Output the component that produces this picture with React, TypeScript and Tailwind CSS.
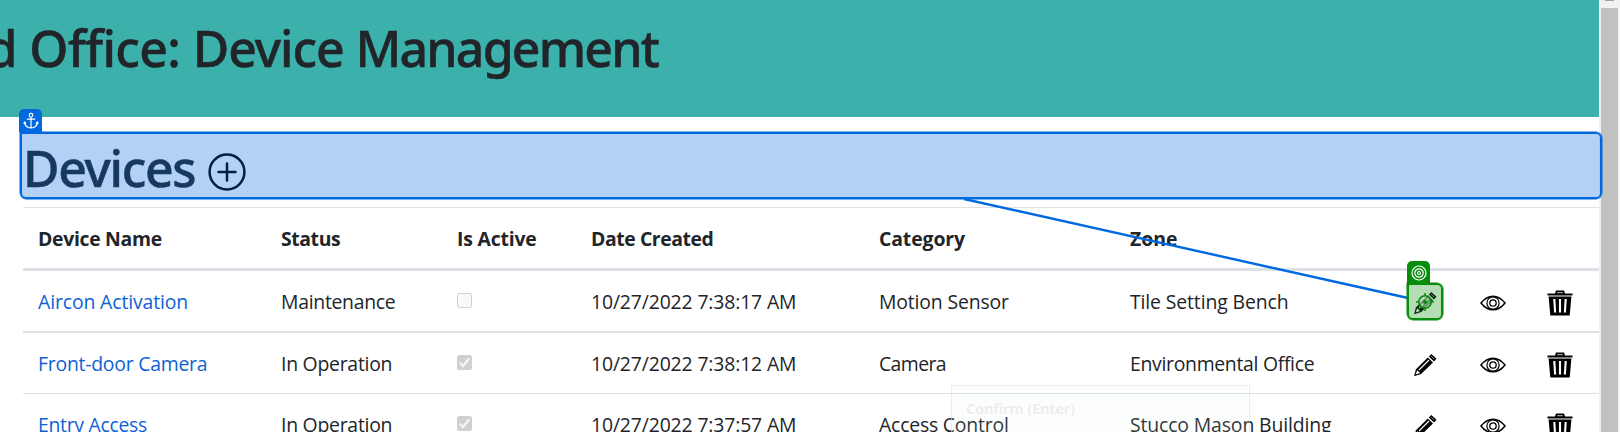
type Cell = { text: string; track: string };

const GRID =
  "grid grid-cols-[243px_176px_134px_288px_251px_283px_66px_67px_67px] items-center";

const HEAD: Cell[] = [
  { text: "Device Name", track: "tracking-[-0.3px]" },
  { text: "Status", track: "tracking-[-0.4px]" },
  { text: "Is Active", track: "tracking-[-0.2px]" },
  { text: "Date Created", track: "tracking-[-0.42px]" },
  { text: "Category", track: "tracking-[-0.1px]" },
  { text: "Zone", track: "" },
];

const ROWS: {
  name: Cell;
  status: Cell;
  active: boolean;
  date: string;
  category: Cell;
  zone: Cell;
  border: string;
}[] = [
  {
    name: { text: "Aircon Activation", track: "tracking-[-0.12px]" },
    status: { text: "Maintenance", track: "tracking-[-0.28px]" },
    active: false,
    date: "10/27/2022 7:38:17 AM",
    category: { text: "Motion Sensor", track: "tracking-[-0.15px]" },
    zone: { text: "Tile Setting Bench", track: "tracking-[-0.12px]" },
    border: "border-b-2",
  },
  {
    name: { text: "Front-door Camera", track: "tracking-[-0.24px]" },
    status: { text: "In Operation", track: "tracking-[-0.25px]" },
    active: true,
    date: "10/27/2022 7:38:12 AM",
    category: { text: "Camera", track: "tracking-[-0.6px]" },
    zone: { text: "Environmental Office", track: "tracking-[-0.3px]" },
    border: "border-b",
  },
  {
    name: { text: "Entry Access", track: "tracking-[-0.3px]" },
    status: { text: "In Operation", track: "tracking-[-0.25px]" },
    active: true,
    date: "10/27/2022 7:37:57 AM",
    category: { text: "Access Control", track: "tracking-[-0.2px]" },
    zone: { text: "Stucco Mason Building", track: "tracking-[-0.13px]" },
    border: "border-b",
  },
];

function Checkbox({ checked }: { checked: boolean }) {
  return checked ? (
    <div className="-mt-[2px] ml-[15px] size-[15px] rounded-[2.5px] bg-[#d0d0d0]">
      <svg viewBox="0 0 15 15" className="size-full" fill="none">
        <path d="M2.8 7.8 6 11 12.2 3.4" stroke="#f6f6f6" strokeWidth="2.3" />
      </svg>
    </div>
  ) : (
    <div className="-mt-px ml-[15px] size-[15px] rounded-[2.5px] border border-[#cfcfcf] bg-[#f9f9f9]" />
  );
}

function Pencil() {
  return (
    <svg viewBox="0 0 24 24" className="size-6">
      <path d="M1 23.2 3 16.2 14.8 4.4 20 9.4 8.2 21Z" fill="#000" />
      <path d="M2.6 21.6 4.2 17.2 7.1 20Z" fill="#fff" />
      <path d="M6 17 16 7" stroke="#fff" strokeWidth="1.1" fill="none" />
      <path d="M15.8 3.4 18.3.9 23.5 5.8 21 8.4Z" fill="#000" />
      <path d="M18.2 3.2 21.2 6.1" stroke="#888" strokeWidth="1" />
    </svg>
  );
}

function Eye() {
  return (
    <svg viewBox="0 0 26 18" className="h-[18px] w-[26px]" fill="none" stroke="#000">
      <path d="M1 9C4.5 4.5 8.5 2.2 13 2.2S21.5 4.5 25 9C21.5 13.5 17.5 15.8 13 15.8S4.5 13.5 1 9Z" strokeWidth="1.5" />
      <circle cx="13" cy="9" r="6.1" strokeWidth="1.2" />
      <circle cx="13" cy="9" r="3.2" strokeWidth="1.3" />
    </svg>
  );
}

function Trash() {
  return (
    <svg viewBox="0 0 26 26" className="size-[26px]">
      <path d="M.5 3.6H8L9 .5H17L18 3.6H25.5V5.4H.5Z" fill="#000" />
      <path d="M10 3.2 10.4 2H15.600L16 3.2Z" fill="#999" />
      <path d="M1.600 6.400H24.400L22.700 25.500H3.300Z" fill="#000" />
      <path d="M7.300 9 8.100 22.500M13 9V22.500M18.700 9 17.900 22.500" stroke="#fff" strokeWidth="2.100" />
    </svg>
  );
}

export default function App() {
  return (
    <div className="relative flex h-[432px] w-[1620px] overflow-hidden bg-white font-['Open_Sans','Noto_Sans',sans-serif] text-[#212529]">
      <main className="w-[1599px] shrink-0">
        <header className="h-[117px] overflow-hidden bg-[#3cb0ab] pt-[18px]">
          <h1 className="-ml-[13.5px] whitespace-nowrap font-['Noto_Sans',sans-serif] text-[50px] font-medium leading-[60px] [-webkit-text-stroke:0.5px_#212529]">
            <span className="tracking-[-0.6px]">d Office: </span>
            <span className="tracking-[-1.1px]">Device </span>
            <span className="tracking-[-1.8px]">Management</span>
          </h1>
        </header>
        <div className="flex h-[90px] pl-[23px] pt-[21px]">
          <h1 className="font-['Noto_Sans',sans-serif] text-[50px] font-medium leading-[60px] tracking-[-1.35px] [-webkit-text-stroke:0.5px_#212529]">
            Devices
          </h1>
          <svg viewBox="0 0 38 38" className="ml-[13px] mt-[15px] size-[38px]" fill="none" stroke="#000" strokeWidth="2.5">
            <circle cx="19" cy="19" r="17.4" />
            <path d="M19 10.5V27.5M10.5 19H27.5" strokeLinecap="round" />
          </svg>
        </div>
        <section className="ml-[23px] whitespace-nowrap border-t border-[#dee2e6] text-[19.4px] leading-[30px]">
          <div className={`${GRID} h-[63px] border-b-[3px] border-[#dee2e6] pt-[2px] font-bold`}>
            {HEAD.map((h) => (
              <div key={h.text} className={`pl-[15px] ${h.track}`}>
                {h.text}
              </div>
            ))}
          </div>
          {ROWS.map((r) => (
            <div key={r.date} className={`${GRID} ${r.border} box-content h-[60px] border-[#dee2e6]`}>
              <a className={`pl-[15px] pt-[2px] text-[#0d62d6] ${r.name.track}`}>{r.name.text}</a>
              <div className={`pl-[15px] pt-[2px] ${r.status.track}`}>{r.status.text}</div>
              <Checkbox checked={r.active} />
              <div className="pl-[15px] pt-[2px] tracking-[-0.14px]">{r.date}</div>
              <div className={`pl-[15px] pt-[2px] ${r.category.track}`}>{r.category.text}</div>
              <div className={`pl-[15px] pt-[2px] ${r.zone.track}`}>{r.zone.text}</div>
              <div className="pl-[15px] pt-[4px]"><Pencil /></div>
              <div className="pl-[15.5px] pt-[4px]"><Eye /></div>
              <div className="pl-[15.5px] pt-[4px]"><Trash /></div>
            </div>
          ))}
        </section>
      </main>

      <aside className="flex w-[21px] shrink-0 flex-col items-center bg-[#f1f1f1]">
        <div className="h-px w-[9px] bg-[#a0a0a0]" />
        <div className="mt-[7px] w-[17px] grow bg-[#c1c1c1]" />
      </aside>

      <div className="absolute left-[951px] top-[385px] h-[80px] w-[299px] border border-[#d8d8d8]/50 bg-[#e0f4ee]/10 pl-[14px] pt-[11px] text-[14.6px] font-bold leading-[22px] tracking-[-0.2px] text-[#e9e9ea]/80">
        Confirm (Enter)
      </div>

      <svg className="absolute left-0 top-0 h-[432px] w-[1620px]" fill="none">
        <path d="M964 199 1408 298" stroke="#0069e0" strokeWidth="2.4" />
      </svg>

      <div className="absolute left-[20px] top-[132px] h-[67px] w-[1582px] rounded-[6px] rounded-tl-none border-2 border-[#0069e0] bg-[#0069e0]/30 shadow-[0_0_0_0.5px_#0069e0]" />
      <div className="absolute left-[19px] top-[109px] flex h-[23px] w-[23px] items-center justify-center rounded-t-[5px] bg-[#0069e0]">
        <svg viewBox="0 0 16 18" className="h-[18px] w-[16px]" fill="none" stroke="#fff" strokeWidth="1.2">
          <circle cx="8" cy="3.2" r="1.8" />
          <path d="M8 5V16M3.8 7.2H12.2M1.6 10.2C1.8 13.8 4.5 15.6 8 16 11.5 15.6 14.2 13.8 14.4 10.2M.7 11.8 1.6 10 3 11.5M15.3 11.8 14.4 10 13 11.5" />
        </svg>
      </div>

      <div className="absolute left-[1407px] top-[283px] h-[37px] w-[36px] rounded-[6px] rounded-tl-none border-2 border-[#078d0b] bg-[#078d0b]/30 shadow-[0_0_0_0.5px_#078d0b]" />
      <div className="absolute left-[1407px] top-[261px] flex h-[23px] w-[23px] items-center justify-center rounded-t-[5px] bg-[#078d0b]">
        <svg viewBox="0 0 16 16" className="size-4" fill="none" stroke="#fff" strokeWidth="1.2">
          <circle cx="8" cy="8" r="7" />
          <circle cx="8" cy="8" r="4.2" />
          <circle cx="8" cy="8" r="1.5" />
        </svg>
      </div>
      <svg viewBox="0 0 20 20" className="absolute left-[1415px] top-[292px] size-5" fill="none" stroke="#078d0b">
        <circle cx="10" cy="10" r="6.2" fill="#b5dcb6" fillOpacity="0.6" strokeWidth="1.6" />
        <circle cx="10" cy="10" r="2" fill="#078d0b" stroke="none" />
        <path d="M10 1V4M10 16V19M1 10H4M16 10H19" strokeWidth="1.5" />
      </svg>
    </div>
  );
}
